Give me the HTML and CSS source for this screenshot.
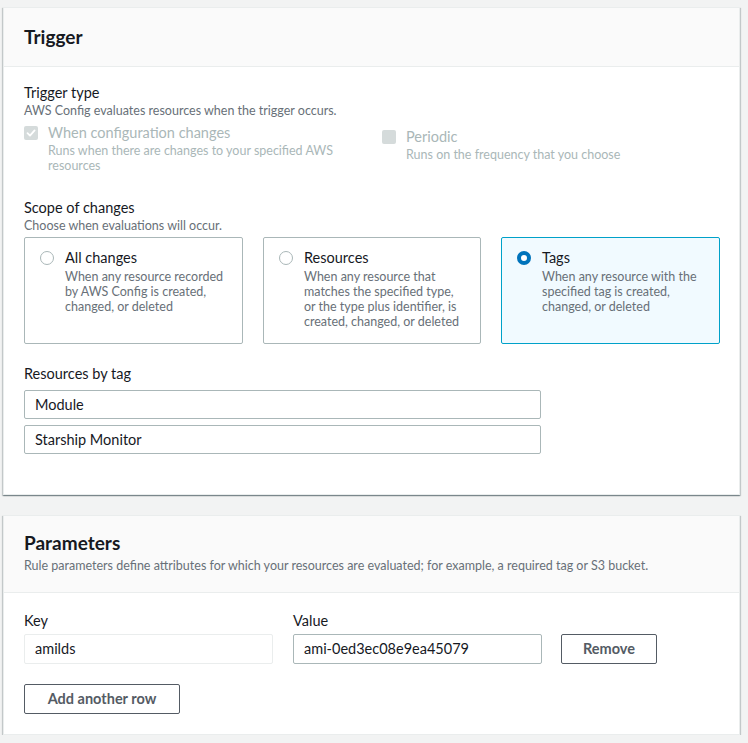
FILE: index.html
```html
<!DOCTYPE html>
<html lang="en">
<head>
<meta charset="utf-8">
<title>Trigger</title>
<link rel="stylesheet" href="styles.css">
</head>
<body>
<div class="page">
  <section class="card">
    <header class="card-header">
      <h2 class="card-title">Trigger</h2>
    </header>
    <div class="card-body trigger-body">
      <div class="field-label">Trigger type</div>
      <div class="field-desc">AWS Config evaluates resources when the trigger occurs.</div>
      <div class="check-row">
        <div class="check-item">
          <span class="checkbox checked">
            <svg width="10" height="10" viewBox="0 0 10 10"><path d="M1.5 5.2 L4 7.6 L8.6 2.4" fill="none" stroke="#fff" stroke-width="1.8" stroke-linecap="round" stroke-linejoin="round"/></svg>
          </span>
          <div class="check-text">
            <div class="check-title">When configuration changes</div>
            <div class="check-desc">Runs when there are changes to your specified AWS resources</div>
          </div>
        </div>
        <div class="check-item periodic">
          <span class="checkbox"></span>
          <div class="check-text">
            <div class="check-title">Periodic</div>
            <div class="check-desc">Runs on the frequency that you choose</div>
          </div>
        </div>
      </div>

      <div class="field-label scope-label">Scope of changes</div>
      <div class="field-desc">Choose when evaluations will occur.</div>
      <div class="tiles">
        <div class="tile">
          <span class="radio"></span>
          <div class="tile-text">
            <div class="tile-title">All changes</div>
            <div class="tile-desc">When any resource recorded by AWS Config is created, changed, or deleted</div>
          </div>
        </div>
        <div class="tile">
          <span class="radio"></span>
          <div class="tile-text">
            <div class="tile-title">Resources</div>
            <div class="tile-desc">When any resource that matches the specified type, or the type plus identifier, is created, changed, or deleted</div>
          </div>
        </div>
        <div class="tile selected">
          <span class="radio on"></span>
          <div class="tile-text">
            <div class="tile-title">Tags</div>
            <div class="tile-desc">When any resource with the specified tag is created, changed, or deleted</div>
          </div>
        </div>
      </div>

      <div class="field-label tag-label">Resources by tag</div>
      <div class="tag-inputs">
        <div class="input">Module</div>
        <div class="input">Starship Monitor</div>
      </div>
    </div>
  </section>

  <section class="card">
    <header class="card-header params-header">
      <h2 class="card-title">Parameters</h2>
      <div class="header-desc">Rule parameters define attributes for which your resources are evaluated; for example, a required tag or S3 bucket.</div>
    </header>
    <div class="card-body params-body">
      <div class="param-grid">
        <div class="field-label">Key</div>
        <div class="field-label">Value</div>
        <div></div>
        <div class="input light">amilds</div>
        <div class="input">ami-0ed3ec08e9ea45079</div>
        <button class="btn remove">Remove</button>
      </div>
      <button class="btn add">Add another row</button>
    </div>
  </section>
</div>
</body>
</html>
```

FILE: styles.css
```css
* { box-sizing: border-box; }
html, body { margin: 0; padding: 0; }
body {
  background: #f2f3f3;
  font-family: "Lato", "Roboto", "Liberation Sans", sans-serif;
  color: #16191f;
  font-size: 14.5px;
  line-height: 20px;
}
.page {
  padding: 7px 8px 0 3px;
  display: flex;
  flex-direction: column;
  gap: 20px;
}
.card {
  background: #fff;
  border: 1px solid #eaeded;
  box-shadow: 0 1px 1px 0 rgba(0,28,36,.3), 1px 1px 1px 0 rgba(0,28,36,.15), -1px 1px 1px 0 rgba(0,28,36,.15);
}
.card-header {
  background: #fafafa;
  border-bottom: 1px solid #eaeded;
  padding: 18px 20px 18px;
}
.card-title {
  margin: 0;
  font-size: 19px;
  line-height: 22px;
  font-weight: 700;
  color: #16191f;
}
.card-body { padding: 16px 20px 40px; }

.field-label { font-size: 14.5px; line-height: 20px; color: #16191f; }
.field-desc { font-size: 12.5px; line-height: 16px; color: #687078; }

.check-row {
  display: flex;
  align-items: flex-start;
  margin-top: 4px;
}
.check-item { display: flex; gap: 10px; align-items: flex-start; }
.check-item:first-child { width: 358px; }
.check-item.periodic { margin-top: 4px; }
.checkbox {
  width: 14px; height: 14px;
  margin-top: 3px;
  border-radius: 2px;
  background: #d5dbdb;
  flex: none;
  display: flex; align-items: center; justify-content: center;
}
.check-title { font-size: 14.5px; line-height: 20px; color: #aab7b8; }
.check-desc { font-size: 12.5px; line-height: 15px; color: #aab7b8; width: 296px; }

.scope-label { margin-top: 25px; }
.tiles {
  margin-top: 3px;
  display: grid;
  grid-template-columns: 219px 218px 219px;
  gap: 20px;
  width: 696px;
}
.tile {
  border: 1px solid #aab7b8;
  border-radius: 2px;
  padding: 10px 12px 14px 15px;
  min-height: 106px;
  display: flex;
  gap: 11px;
  align-items: flex-start;
}
.tile.selected { border-color: #00a1c9; background: #f1faff; }
.radio {
  width: 14px; height: 14px;
  border-radius: 50%;
  border: 1px solid #aab7b8;
  background: #fff;
  flex: none;
  margin-top: 3px;
}
.radio.on {
  border: 4px solid #0073bb;
}
.tile-title { font-size: 14.5px; line-height: 20px; color: #16191f; }
.tile-desc { font-size: 12.5px; line-height: 15px; color: #687078; margin-top: 0.5px; }

.tag-label { margin-top: 20px; }
.tag-inputs {
  margin-top: 6px;
  width: 517px;
  display: flex;
  flex-direction: column;
  gap: 6px;
}
.input {
  height: 29px;
  border: 1px solid #aab7b8;
  border-radius: 2px;
  padding: 3px 10px;
  font-size: 14.5px;
  line-height: 21px;
  color: #16191f;
  background: #fff;
}
.input.light { border-color: #eaeded; }

.params-header { padding: 16px 20px 18px; }
.header-desc { margin-top: 4px; font-size: 12.5px; line-height: 16px; color: #687078; }
.params-body { padding: 18px 20px 20px; }
.param-grid {
  display: grid;
  grid-template-columns: 249px 249px 96px;
  column-gap: 20px;
  row-gap: 3px;
}
.param-grid .input { height: 30px; }
.btn {
  font-family: inherit;
  font-size: 14.5px;
  font-weight: 700;
  color: #545b64;
  background: #fff;
  border: 1px solid #545b64;
  border-radius: 2px;
  height: 30px;
  padding: 0 20px;
  cursor: pointer;
}
.btn.remove { width: 96px; margin-left: -1px; }
.btn.add { margin-top: 20px; width: 156px; display: block; }
```
